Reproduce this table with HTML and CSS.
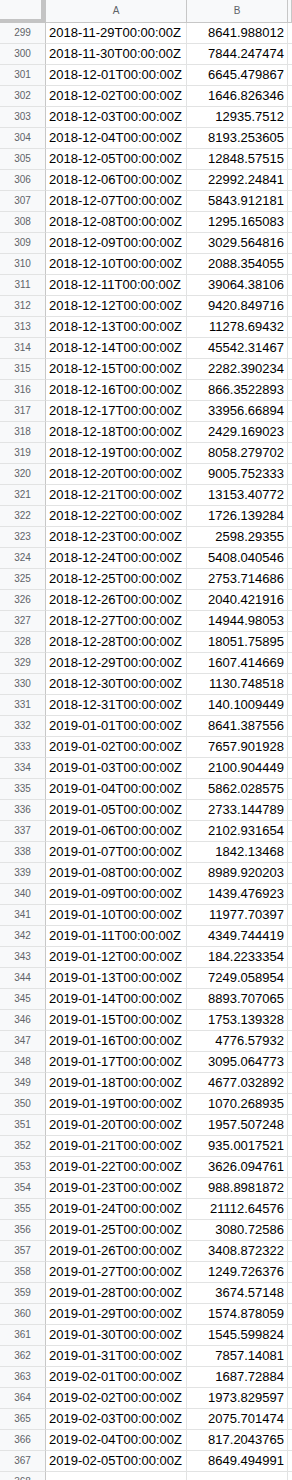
FILE: index.html
```html
<!DOCTYPE html>
<html>
<head>
<meta charset="utf-8">
<link rel="stylesheet" href="styles.css">
</head>
<body>
<div class="sheet">
  <div class="row head">
    <div class="corner"></div>
    <div class="colh">A</div>
    <div class="colh">B</div>
    <div class="colh"></div>
  </div>
  <div class="row"><div class="num">299</div><div class="c">2018-11-29T00:00:00Z</div><div class="c v">8641.988012</div><div class="c"></div></div>
  <div class="row"><div class="num">300</div><div class="c">2018-11-30T00:00:00Z</div><div class="c v">7844.247474</div><div class="c"></div></div>
  <div class="row"><div class="num">301</div><div class="c">2018-12-01T00:00:00Z</div><div class="c v">6645.479867</div><div class="c"></div></div>
  <div class="row"><div class="num">302</div><div class="c">2018-12-02T00:00:00Z</div><div class="c v">1646.826346</div><div class="c"></div></div>
  <div class="row"><div class="num">303</div><div class="c">2018-12-03T00:00:00Z</div><div class="c v">12935.7512</div><div class="c"></div></div>
  <div class="row"><div class="num">304</div><div class="c">2018-12-04T00:00:00Z</div><div class="c v">8193.253605</div><div class="c"></div></div>
  <div class="row"><div class="num">305</div><div class="c">2018-12-05T00:00:00Z</div><div class="c v">12848.57515</div><div class="c"></div></div>
  <div class="row"><div class="num">306</div><div class="c">2018-12-06T00:00:00Z</div><div class="c v">22992.24841</div><div class="c"></div></div>
  <div class="row"><div class="num">307</div><div class="c">2018-12-07T00:00:00Z</div><div class="c v">5843.912181</div><div class="c"></div></div>
  <div class="row"><div class="num">308</div><div class="c">2018-12-08T00:00:00Z</div><div class="c v">1295.165083</div><div class="c"></div></div>
  <div class="row"><div class="num">309</div><div class="c">2018-12-09T00:00:00Z</div><div class="c v">3029.564816</div><div class="c"></div></div>
  <div class="row"><div class="num">310</div><div class="c">2018-12-10T00:00:00Z</div><div class="c v">2088.354055</div><div class="c"></div></div>
  <div class="row"><div class="num">311</div><div class="c">2018-12-11T00:00:00Z</div><div class="c v">39064.38106</div><div class="c"></div></div>
  <div class="row"><div class="num">312</div><div class="c">2018-12-12T00:00:00Z</div><div class="c v">9420.849716</div><div class="c"></div></div>
  <div class="row"><div class="num">313</div><div class="c">2018-12-13T00:00:00Z</div><div class="c v">11278.69432</div><div class="c"></div></div>
  <div class="row"><div class="num">314</div><div class="c">2018-12-14T00:00:00Z</div><div class="c v">45542.31467</div><div class="c"></div></div>
  <div class="row"><div class="num">315</div><div class="c">2018-12-15T00:00:00Z</div><div class="c v">2282.390234</div><div class="c"></div></div>
  <div class="row"><div class="num">316</div><div class="c">2018-12-16T00:00:00Z</div><div class="c v">866.3522893</div><div class="c"></div></div>
  <div class="row"><div class="num">317</div><div class="c">2018-12-17T00:00:00Z</div><div class="c v">33956.66894</div><div class="c"></div></div>
  <div class="row"><div class="num">318</div><div class="c">2018-12-18T00:00:00Z</div><div class="c v">2429.169023</div><div class="c"></div></div>
  <div class="row"><div class="num">319</div><div class="c">2018-12-19T00:00:00Z</div><div class="c v">8058.279702</div><div class="c"></div></div>
  <div class="row"><div class="num">320</div><div class="c">2018-12-20T00:00:00Z</div><div class="c v">9005.752333</div><div class="c"></div></div>
  <div class="row"><div class="num">321</div><div class="c">2018-12-21T00:00:00Z</div><div class="c v">13153.40772</div><div class="c"></div></div>
  <div class="row"><div class="num">322</div><div class="c">2018-12-22T00:00:00Z</div><div class="c v">1726.139284</div><div class="c"></div></div>
  <div class="row"><div class="num">323</div><div class="c">2018-12-23T00:00:00Z</div><div class="c v">2598.29355</div><div class="c"></div></div>
  <div class="row"><div class="num">324</div><div class="c">2018-12-24T00:00:00Z</div><div class="c v">5408.040546</div><div class="c"></div></div>
  <div class="row"><div class="num">325</div><div class="c">2018-12-25T00:00:00Z</div><div class="c v">2753.714686</div><div class="c"></div></div>
  <div class="row"><div class="num">326</div><div class="c">2018-12-26T00:00:00Z</div><div class="c v">2040.421916</div><div class="c"></div></div>
  <div class="row"><div class="num">327</div><div class="c">2018-12-27T00:00:00Z</div><div class="c v">14944.98053</div><div class="c"></div></div>
  <div class="row"><div class="num">328</div><div class="c">2018-12-28T00:00:00Z</div><div class="c v">18051.75895</div><div class="c"></div></div>
  <div class="row"><div class="num">329</div><div class="c">2018-12-29T00:00:00Z</div><div class="c v">1607.414669</div><div class="c"></div></div>
  <div class="row"><div class="num">330</div><div class="c">2018-12-30T00:00:00Z</div><div class="c v">1130.748518</div><div class="c"></div></div>
  <div class="row"><div class="num">331</div><div class="c">2018-12-31T00:00:00Z</div><div class="c v">140.1009449</div><div class="c"></div></div>
  <div class="row"><div class="num">332</div><div class="c">2019-01-01T00:00:00Z</div><div class="c v">8641.387556</div><div class="c"></div></div>
  <div class="row"><div class="num">333</div><div class="c">2019-01-02T00:00:00Z</div><div class="c v">7657.901928</div><div class="c"></div></div>
  <div class="row"><div class="num">334</div><div class="c">2019-01-03T00:00:00Z</div><div class="c v">2100.904449</div><div class="c"></div></div>
  <div class="row"><div class="num">335</div><div class="c">2019-01-04T00:00:00Z</div><div class="c v">5862.028575</div><div class="c"></div></div>
  <div class="row"><div class="num">336</div><div class="c">2019-01-05T00:00:00Z</div><div class="c v">2733.144789</div><div class="c"></div></div>
  <div class="row"><div class="num">337</div><div class="c">2019-01-06T00:00:00Z</div><div class="c v">2102.931654</div><div class="c"></div></div>
  <div class="row"><div class="num">338</div><div class="c">2019-01-07T00:00:00Z</div><div class="c v">1842.13468</div><div class="c"></div></div>
  <div class="row"><div class="num">339</div><div class="c">2019-01-08T00:00:00Z</div><div class="c v">8989.920203</div><div class="c"></div></div>
  <div class="row"><div class="num">340</div><div class="c">2019-01-09T00:00:00Z</div><div class="c v">1439.476923</div><div class="c"></div></div>
  <div class="row"><div class="num">341</div><div class="c">2019-01-10T00:00:00Z</div><div class="c v">11977.70397</div><div class="c"></div></div>
  <div class="row"><div class="num">342</div><div class="c">2019-01-11T00:00:00Z</div><div class="c v">4349.744419</div><div class="c"></div></div>
  <div class="row"><div class="num">343</div><div class="c">2019-01-12T00:00:00Z</div><div class="c v">184.2233354</div><div class="c"></div></div>
  <div class="row"><div class="num">344</div><div class="c">2019-01-13T00:00:00Z</div><div class="c v">7249.058954</div><div class="c"></div></div>
  <div class="row"><div class="num">345</div><div class="c">2019-01-14T00:00:00Z</div><div class="c v">8893.707065</div><div class="c"></div></div>
  <div class="row"><div class="num">346</div><div class="c">2019-01-15T00:00:00Z</div><div class="c v">1753.139328</div><div class="c"></div></div>
  <div class="row"><div class="num">347</div><div class="c">2019-01-16T00:00:00Z</div><div class="c v">4776.57932</div><div class="c"></div></div>
  <div class="row"><div class="num">348</div><div class="c">2019-01-17T00:00:00Z</div><div class="c v">3095.064773</div><div class="c"></div></div>
  <div class="row"><div class="num">349</div><div class="c">2019-01-18T00:00:00Z</div><div class="c v">4677.032892</div><div class="c"></div></div>
  <div class="row"><div class="num">350</div><div class="c">2019-01-19T00:00:00Z</div><div class="c v">1070.268935</div><div class="c"></div></div>
  <div class="row"><div class="num">351</div><div class="c">2019-01-20T00:00:00Z</div><div class="c v">1957.507248</div><div class="c"></div></div>
  <div class="row"><div class="num">352</div><div class="c">2019-01-21T00:00:00Z</div><div class="c v">935.0017521</div><div class="c"></div></div>
  <div class="row"><div class="num">353</div><div class="c">2019-01-22T00:00:00Z</div><div class="c v">3626.094761</div><div class="c"></div></div>
  <div class="row"><div class="num">354</div><div class="c">2019-01-23T00:00:00Z</div><div class="c v">988.8981872</div><div class="c"></div></div>
  <div class="row"><div class="num">355</div><div class="c">2019-01-24T00:00:00Z</div><div class="c v">21112.64576</div><div class="c"></div></div>
  <div class="row"><div class="num">356</div><div class="c">2019-01-25T00:00:00Z</div><div class="c v">3080.72586</div><div class="c"></div></div>
  <div class="row"><div class="num">357</div><div class="c">2019-01-26T00:00:00Z</div><div class="c v">3408.872322</div><div class="c"></div></div>
  <div class="row"><div class="num">358</div><div class="c">2019-01-27T00:00:00Z</div><div class="c v">1249.726376</div><div class="c"></div></div>
  <div class="row"><div class="num">359</div><div class="c">2019-01-28T00:00:00Z</div><div class="c v">3674.57148</div><div class="c"></div></div>
  <div class="row"><div class="num">360</div><div class="c">2019-01-29T00:00:00Z</div><div class="c v">1574.878059</div><div class="c"></div></div>
  <div class="row"><div class="num">361</div><div class="c">2019-01-30T00:00:00Z</div><div class="c v">1545.599824</div><div class="c"></div></div>
  <div class="row"><div class="num">362</div><div class="c">2019-01-31T00:00:00Z</div><div class="c v">7857.14081</div><div class="c"></div></div>
  <div class="row"><div class="num">363</div><div class="c">2019-02-01T00:00:00Z</div><div class="c v">1687.72884</div><div class="c"></div></div>
  <div class="row"><div class="num">364</div><div class="c">2019-02-02T00:00:00Z</div><div class="c v">1973.829597</div><div class="c"></div></div>
  <div class="row"><div class="num">365</div><div class="c">2019-02-03T00:00:00Z</div><div class="c v">2075.701474</div><div class="c"></div></div>
  <div class="row"><div class="num">366</div><div class="c">2019-02-04T00:00:00Z</div><div class="c v">817.2043765</div><div class="c"></div></div>
  <div class="row"><div class="num">367</div><div class="c">2019-02-05T00:00:00Z</div><div class="c v">8649.494991</div><div class="c"></div></div>
  <div class="row"><div class="num">368</div><div class="c"></div><div class="c v"></div><div class="c"></div></div>
</div>
</body>
</html>
```
FILE: styles.css
```css
html, body {
  margin: 0;
  padding: 0;
  background: #ffffff;
}
body {
  width: 292px;
  height: 1480px;
  overflow: hidden;
  font-family: "Liberation Sans", Arial, sans-serif;
}
.sheet {
  display: flex;
  flex-direction: column;
}
.row {
  display: grid;
  grid-template-columns: 46px 141px 101px 1fr;
  height: 21px;
  flex: none;
}
.row.head {
  height: 23px;
}
.corner {
  box-sizing: border-box;
  background: #f8f9fa;
  border-right: 5px solid #c4c4c4;
  border-bottom: 4px solid #c4c4c4;
}
.colh {
  box-sizing: border-box;
  background: #f8f9fa;
  border-right: 1px solid #c7c7c7;
  border-bottom: 1px solid #c7c7c7;
  color: #5f6368;
  font-size: 10px;
  line-height: 22px;
  text-align: center;
}
.num {
  box-sizing: border-box;
  background: #f8f9fa;
  border-right: 1px solid #c7c7c7;
  border-bottom: 1px solid #e2e3e3;
  color: #5f6368;
  font-size: 10px;
  line-height: 20px;
  text-align: center;
}
.c {
  box-sizing: border-box;
  border-right: 1px solid #e2e3e3;
  border-bottom: 1px solid #e2e3e3;
  color: #000000;
  font-size: 13px;
  line-height: 20px;
  padding: 0 3px;
  white-space: nowrap;
  overflow: hidden;
}
.v {
  text-align: right;
}
```
